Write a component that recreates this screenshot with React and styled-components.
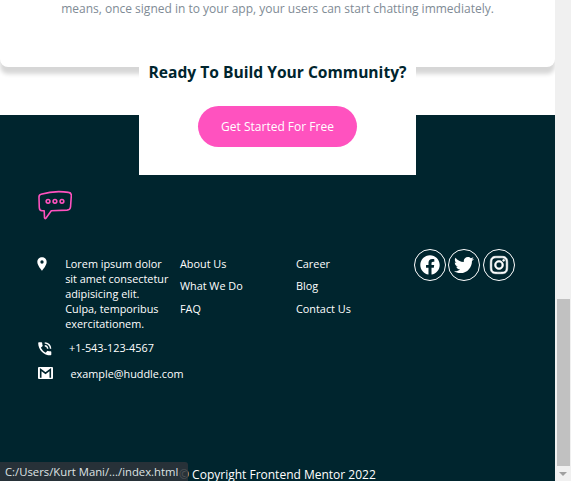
import React from "react";
import styled, { createGlobalStyle } from "styled-components";
import { MdLocationOn, MdPhoneInTalk } from "react-icons/md";
import { FaFacebook, FaTwitter, FaInstagram } from "react-icons/fa";

const Global = createGlobalStyle`
  * { box-sizing: border-box; }
  body { margin: 0; background: #fff; font-family: "Open Sans", sans-serif; overflow: hidden; }
`;

const Window = styled.div`
  position: relative;
  display: grid;
  grid-template-columns: 555px 16px;
  height: 481px;
  overflow: hidden;
`;

const Page = styled.main`
  display: flex;
  flex-direction: column;
  height: 481px;
  overflow: hidden;
  position: relative;
`;

const Card = styled.section`
  flex: none;
  height: 67px;
  margin-bottom: 48px;
  border-radius: 0 0 8px 8px;
  background: #fff;
  box-shadow: 0 7px 4px rgba(0, 0, 0, 0.16);
  text-align: center;
`;

const CardText = styled.p`
  margin: 0;
  font-size: 12px;
  line-height: 18px;
  color: #808b95;
  white-space: nowrap;
`;

const CallToAction = styled.section`
  position: absolute;
  left: 139px;
  top: 55px;
  width: 277px;
  height: 120px;
  background: #fff;
  display: flex;
  flex-direction: column;
  align-items: center;
`;

const Heading = styled.h2`
  margin: 6px 0 0;
  height: 45px;
  font-size: 15.6px;
  line-height: 22px;
  font-weight: 700;
  color: #00252e;
  white-space: nowrap;
`;

const Button = styled.button`
  width: 159px;
  height: 41px;
  padding: 0;
  border: 0;
  border-radius: 21px;
  background: #ff52bf;
  color: #fff;
  font: 12px "Open Sans", sans-serif;
`;

const Footer = styled.footer`
  flex: 1;
  background: #00252e;
  color: #fff;
  padding: 75px 0 0 37.5px;
  display: flex;
  flex-direction: column;
  font-size: 10.85px;
  font-weight: 500;
  line-height: 15px;
`;

const Logo = styled.svg`
  display: block;
  width: 34.5px;
  height: 30px;
`;

const Columns = styled.div`
  display: grid;
  grid-template-columns: 142.5px 116px 118px 103px;
  flex: none;
  height: 246px;
  padding-top: 36px;
`;

const Contacts = styled.div`
  display: flex;
  flex-direction: column;
`;

const Contact = styled.div`
  display: grid;
  grid-template-columns: ${(p) => p.$indent}px max-content;
  margin-bottom: ${(p) => p.$gap}px;
  white-space: nowrap;
  svg { display: block; margin-left: ${(p) => p.$shift || 0}px; }
`;

const Links = styled.nav`
  display: flex;
  flex-direction: column;
  gap: 7.4px;
`;

const Link = styled.a`
  color: inherit;
`;

const Socials = styled.div`
  display: flex;
  gap: 2.3px;
  margin-top: -7px;
`;

const Social = styled.a`
  flex: none;
  width: 32px;
  height: 32px;
  border: 1px solid #fff;
  border-radius: 50%;
  display: flex;
  align-items: center;
  justify-content: center;
  font-size: 20px;
  svg { stroke: #fff; stroke-width: ${(p) => p.$stroke || 0}; }
`;

const Copyright = styled.p`
  margin: 0 0 0 141.5px;
  font-size: 12px;
  line-height: 17px;
  white-space: nowrap;
`;

const Scrollbar = styled.div`
  background: #f0f0f0;
  display: flex;
  flex-direction: column;
  justify-content: flex-end;
  align-items: center;
`;

const Thumb = styled.div`
  width: 13px;
  height: 167px;
  background: #c1c1c1;
`;

const Arrow = styled.svg`
  width: 8px;
  height: 15px;
`;

const Status = styled.div`
  position: absolute;
  left: 0;
  bottom: 0;
  width: 188px;
  height: 19px;
  padding-left: 5px;
  border-radius: 0 3px 0 0;
  background: rgba(46, 52, 57, 0.85);
  color: #dfe3e4;
  font-size: 11.3px;
  line-height: 20px;
  white-space: nowrap;
`;

export default function App() {
  return (
    <Window>
      <Global />
      <Page>
        <Card>
          <CardText>means, once signed in to your app, your users can start chatting immediately.</CardText>
        </Card>
        <Footer>
          <Logo viewBox="0 0 35 30" fill="none" stroke="#ff52bf" strokeWidth="1.6" strokeLinejoin="round">
            <path d="M3 4Q17 0 31 2.2Q34 2.6 33.8 5.5L33 17Q32.7 20 29.5 20.2L13.5 20.8L8 28.5Q7 29.3 6.6 28L6.3 20.8H4Q1.4 20.6 1.3 17.5L1 7Q1 4.5 3 4Z" />
            <circle cx="10.2" cy="11.3" r="1.9" />
            <circle cx="17.2" cy="11.3" r="1.9" />
            <circle cx="24.3" cy="11.3" r="1.9" />
          </Logo>
          <Columns>
            <Contacts>
              <Contact $indent={27.7} $gap={9} $shift={-3.5}>
                <MdLocationOn size={16} />
                <span>Lorem ipsum dolor<br />sit amet consectetur<br />adipisicing elit.<br />Culpa, temporibus<br />exercitationem.</span>
              </Contact>
              <Contact $indent={31.5} $gap={8.4} $shift={-2}>
                <MdPhoneInTalk size={17.5} />
                <span>+1-543-123-4567</span>
              </Contact>
              <Contact $indent={33} $gap={0} $shift={0.5}>
                <svg width="15" height="13" viewBox="0 0 15 13">
                  <rect y="1" width="15" height="12" rx="1" fill="#fff" />
                  <path d="M2.7 11.7V3.6L7.5 7.2L12.3 3.6V11.7" fill="none" stroke="#00252e" strokeWidth="1.6" />
                </svg>
                <span>example@huddle.com</span>
              </Contact>
            </Contacts>
            <Links><Link>About Us</Link><Link>What We Do</Link><Link>FAQ</Link></Links>
            <Links><Link>Career</Link><Link>Blog</Link><Link>Contact Us</Link></Links>
            <Socials>
              <Social><FaFacebook /></Social>
              <Social><FaTwitter /></Social>
              <Social $stroke={16}><FaInstagram /></Social>
            </Socials>
          </Columns>
          <Copyright>© Copyright Frontend Mentor 2022</Copyright>
        </Footer>
        <CallToAction>
          <Heading>Ready To Build Your Community?</Heading>
          <Button>Get Started For Free</Button>
        </CallToAction>
      </Page>
      <Scrollbar>
        <Thumb />
        <Arrow viewBox="0 0 8 15"><path d="M0 6H8L4 10Z" fill="#a0a0a0" /></Arrow>
      </Scrollbar>
      <Status>C:/Users/Kurt Mani/.../index.html</Status>
    </Window>
  );
}
